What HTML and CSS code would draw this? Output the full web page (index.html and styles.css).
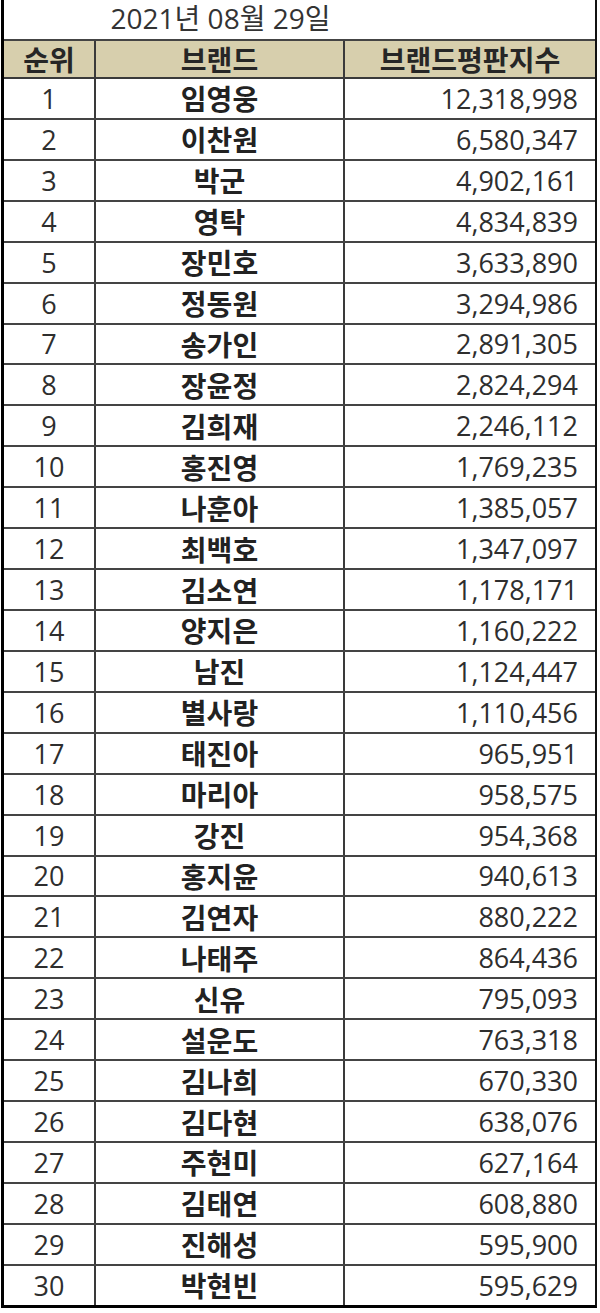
FILE: index.html
```html
<!DOCTYPE html>
<html lang="ko">
<head>
<meta charset="utf-8">
<title>브랜드평판지수</title>
<link rel="stylesheet" href="styles.css">
</head>
<body>
<div class="sheet">
  <div class="row date-row">
    <div class="cell"></div>
    <div class="cell date"><span>2021년 08월 29일</span></div>
    <div class="cell"></div>
  </div>
  <div class="row head">
    <div class="cell c1">순위</div>
    <div class="cell c2">브랜드</div>
    <div class="cell c3h">브랜드평판지수</div>
  </div>
  <div class="row"><div class="cell c1">1</div><div class="cell c2">임영웅</div><div class="cell c3">12,318,998</div></div>
  <div class="row"><div class="cell c1">2</div><div class="cell c2">이찬원</div><div class="cell c3">6,580,347</div></div>
  <div class="row"><div class="cell c1">3</div><div class="cell c2">박군</div><div class="cell c3">4,902,161</div></div>
  <div class="row"><div class="cell c1">4</div><div class="cell c2">영탁</div><div class="cell c3">4,834,839</div></div>
  <div class="row"><div class="cell c1">5</div><div class="cell c2">장민호</div><div class="cell c3">3,633,890</div></div>
  <div class="row"><div class="cell c1">6</div><div class="cell c2">정동원</div><div class="cell c3">3,294,986</div></div>
  <div class="row"><div class="cell c1">7</div><div class="cell c2">송가인</div><div class="cell c3">2,891,305</div></div>
  <div class="row"><div class="cell c1">8</div><div class="cell c2">장윤정</div><div class="cell c3">2,824,294</div></div>
  <div class="row"><div class="cell c1">9</div><div class="cell c2">김희재</div><div class="cell c3">2,246,112</div></div>
  <div class="row"><div class="cell c1">10</div><div class="cell c2">홍진영</div><div class="cell c3">1,769,235</div></div>
  <div class="row"><div class="cell c1">11</div><div class="cell c2">나훈아</div><div class="cell c3">1,385,057</div></div>
  <div class="row"><div class="cell c1">12</div><div class="cell c2">최백호</div><div class="cell c3">1,347,097</div></div>
  <div class="row"><div class="cell c1">13</div><div class="cell c2">김소연</div><div class="cell c3">1,178,171</div></div>
  <div class="row"><div class="cell c1">14</div><div class="cell c2">양지은</div><div class="cell c3">1,160,222</div></div>
  <div class="row"><div class="cell c1">15</div><div class="cell c2">남진</div><div class="cell c3">1,124,447</div></div>
  <div class="row"><div class="cell c1">16</div><div class="cell c2">별사랑</div><div class="cell c3">1,110,456</div></div>
  <div class="row"><div class="cell c1">17</div><div class="cell c2">태진아</div><div class="cell c3">965,951</div></div>
  <div class="row"><div class="cell c1">18</div><div class="cell c2">마리아</div><div class="cell c3">958,575</div></div>
  <div class="row"><div class="cell c1">19</div><div class="cell c2">강진</div><div class="cell c3">954,368</div></div>
  <div class="row"><div class="cell c1">20</div><div class="cell c2">홍지윤</div><div class="cell c3">940,613</div></div>
  <div class="row"><div class="cell c1">21</div><div class="cell c2">김연자</div><div class="cell c3">880,222</div></div>
  <div class="row"><div class="cell c1">22</div><div class="cell c2">나태주</div><div class="cell c3">864,436</div></div>
  <div class="row"><div class="cell c1">23</div><div class="cell c2">신유</div><div class="cell c3">795,093</div></div>
  <div class="row"><div class="cell c1">24</div><div class="cell c2">설운도</div><div class="cell c3">763,318</div></div>
  <div class="row"><div class="cell c1">25</div><div class="cell c2">김나희</div><div class="cell c3">670,330</div></div>
  <div class="row"><div class="cell c1">26</div><div class="cell c2">김다현</div><div class="cell c3">638,076</div></div>
  <div class="row"><div class="cell c1">27</div><div class="cell c2">주현미</div><div class="cell c3">627,164</div></div>
  <div class="row"><div class="cell c1">28</div><div class="cell c2">김태연</div><div class="cell c3">608,880</div></div>
  <div class="row"><div class="cell c1">29</div><div class="cell c2">진해성</div><div class="cell c3">595,900</div></div>
  <div class="row last"><div class="cell c1">30</div><div class="cell c2">박현빈</div><div class="cell c3">595,629</div></div>
</div>
</body>
</html>
```

FILE: styles.css
```css
* { box-sizing: border-box; }
html, body {
  margin: 0;
  padding: 0;
  background: #fff;
}
body {
  font-family: "Open Sans", "Noto Sans CJK KR", sans-serif;
  color: #2e2e2e;
}
.sheet {
  margin-left: 1px;
  width: 596px;
  border-left: 3px solid #000;
  border-right: 2px solid #111;
  border-bottom: 3px solid #000;
}
.row {
  display: grid;
  grid-template-columns: 92px 249px 250px;
  height: 40.93px;
  border-bottom: 2px solid #444;
}
.row.last {
  border-bottom: none;
  height: 38.93px;
}
.cell {
  display: flex;
  align-items: center;
  justify-content: center;
  font-size: 27px;
  line-height: 1;
  white-space: nowrap;
}
.c1, .c2 {
  border-right: 2px solid #3a3a3a;
}
.c2 {
  font-family: "Noto Sans CJK KR", sans-serif;
  font-size: 28px;
  font-weight: bold;
  color: #222;
}
.c3 {
  justify-content: flex-end;
  padding-right: 17px;
}
.date-row {
  height: 39px;
  border-bottom: none;
}
.date {
  font-size: 28px;
  color: #333;
  overflow: visible;
  padding-bottom: 3px;
}
.head {
  height: 40px;
  background: #d7cfad;
  border-top: 2px solid #444;
  border-bottom: 2px solid #3a3a3a;
}
.head .cell {
  font-family: "Noto Sans CJK KR", sans-serif;
  font-size: 28px;
  font-weight: bold;
  color: #262626;
}
.c3h {
  font-weight: bold;
}
```
